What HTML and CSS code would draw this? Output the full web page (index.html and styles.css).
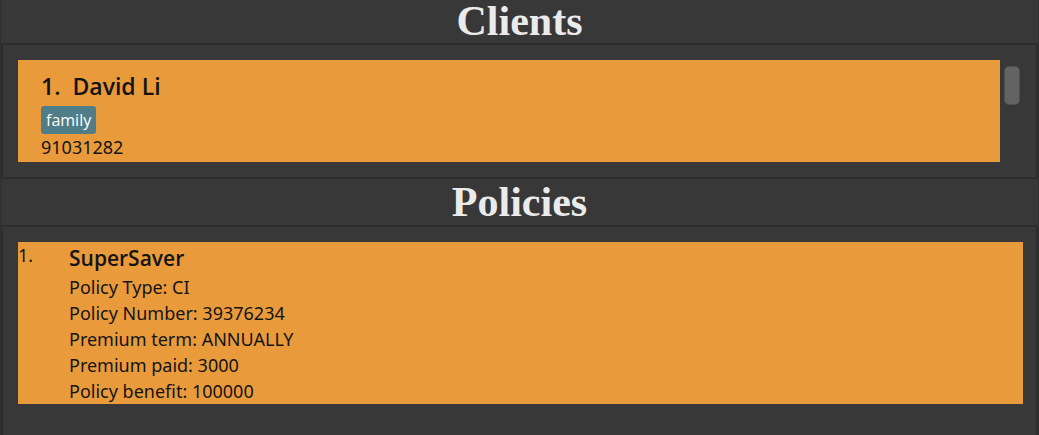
FILE: index.html
```html
<!DOCTYPE html>
<html lang="en">
<head>
<meta charset="utf-8">
<title>Clients and Policies</title>
<link rel="stylesheet" href="styles.css">
</head>
<body>
<main class="app">
  <section class="section">
    <h1 class="heading heading-top">Clients</h1>
    <div class="panel clients">
      <article class="card client">
        <h2 class="client-name"><span>1.</span><span>David Li</span></h2>
        <span class="tag">family</span>
        <p class="phone">91031282</p>
      </article>
      <div class="scroll"><div class="thumb"></div></div>
    </div>
  </section>
  <section class="section grow">
    <h1 class="heading">Policies</h1>
    <div class="panel policies">
      <article class="card policy">
        <span class="index">1.</span>
        <div class="details">
          <h2 class="policy-name">SuperSaver</h2>
          <p>Policy Type: CI</p>
          <p>Policy Number: 39376234</p>
          <p>Premium term: ANNUALLY</p>
          <p>Premium paid: 3000</p>
          <p>Policy benefit: 100000</p>
        </div>
      </article>
    </div>
  </section>
</main>
</body>
</html>
```
FILE: styles.css
```css
* { box-sizing: border-box; }
body {
  margin: 0;
  background: #383838;
  color: #141414;
  font: 18px/26px "Noto Sans", "Open Sans", sans-serif;
}
h1, h2, p { margin: 0; }
.app {
  display: flex;
  flex-direction: column;
  min-height: 100vh;
  border: solid #303030;
  border-width: 0 1px;
}
.section { display: flex; flex-direction: column; }
.grow { flex: 1; }
.heading {
  color: #ebebeb;
  text-align: center;
  font: bold 42px/46px "Liberation Serif", serif;
}
.heading-top { padding-bottom: 1px; line-height: 42px; }
.panel { border: 2px solid #2d2d2d; padding: 15px; }
.card { background: #e99b3c; }
.clients { display: flex; gap: 4px; padding-right: 16px; }
.client { flex: 1; padding: 11px 23px 2px; }
.client-name {
  display: flex;
  gap: 12px;
  font: 600 23px/30px "Open Sans", sans-serif;
}
.tag {
  display: block;
  width: fit-content;
  margin-top: 5px;
  padding: 0 5px;
  border-radius: 3px;
  background: #4f7d88;
  color: #fff;
  font: 500 16px/28px "Open Sans", sans-serif;
}
.scroll { width: 16px; padding-top: 6px; }
.thumb { height: 39px; border: 1px solid #505050; border-radius: 5px; background: #636363; }
.policies { flex: 1; padding-right: 13px; border-bottom: 0; }
.policy { display: flex; }
.index { width: 51px; }
.policy-name { font: 600 21px/32px "Open Sans", sans-serif; }
```
